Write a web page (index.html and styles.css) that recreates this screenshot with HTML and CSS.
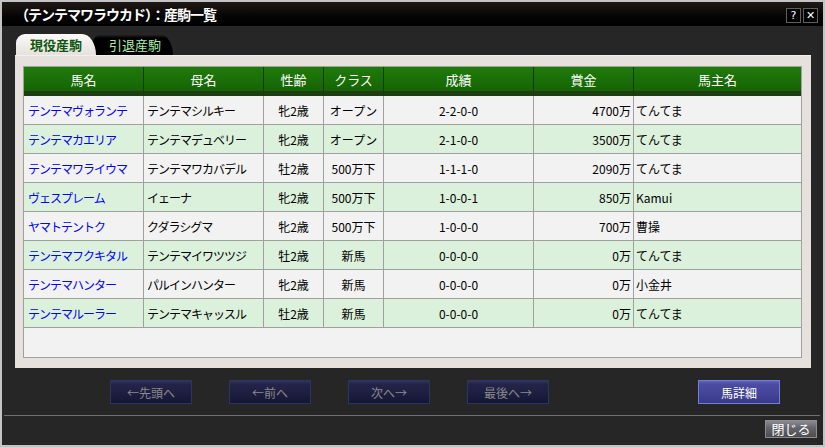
FILE: index.html
```html
<!DOCTYPE html>
<html lang="ja">
<head>
    <meta charset="UTF-8">
    <meta name="viewport" content="width=device-width,initial-scale=1.0">
    <title>産駒一覧</title>
    <link rel="stylesheet" href="styles.css">
</head>
<body>
    <div class="window">
        <div class="titlebar">
            <div class="title">（テンテマワラウカド）：産駒一覧</div>
            <div class="title-btns">
                <span class="tbtn">?</span>
                <span class="tbtn">✕</span>
            </div>
        </div>
        <div class="body">
            <div class="tabs">
                <div class="tab active">現役産駒</div>
                <div class="tab">引退産駒</div>
            </div>
            <div class="panel">
                <div class="grid-box">
                    <table class="grid">
                        <thead>
                            <tr>
                                <th class="c-name">馬名</th>
                                <th class="c-dam">母名</th>
                                <th class="c-age">性齢</th>
                                <th class="c-class">クラス</th>
                                <th class="c-rec">成績</th>
                                <th class="c-prize">賞金</th>
                                <th class="c-owner">馬主名</th>
                            </tr>
                        </thead>
                        <tbody>
                            <tr>
                                <td class="name">テンテマヴォランテ</td><td class="dam">テンテマシルキー</td><td class="mid">牝2歳</td><td class="mid">オープン</td><td class="mid">2-2-0-0</td><td class="num">4700万</td><td class="owner">てんてま</td>
                            </tr>
                            <tr>
                                <td class="name">テンテマカエリア</td><td class="dam">テンテマデュベリー</td><td class="mid">牝2歳</td><td class="mid">オープン</td><td class="mid">2-1-0-0</td><td class="num">3500万</td><td class="owner">てんてま</td>
                            </tr>
                            <tr>
                                <td class="name">テンテマワライウマ</td><td class="dam">テンテマワカバデル</td><td class="mid">牡2歳</td><td class="mid">500万下</td><td class="mid">1-1-1-0</td><td class="num">2090万</td><td class="owner">てんてま</td>
                            </tr>
                            <tr>
                                <td class="name">ヴェスプレーム</td><td class="dam">イェーナ</td><td class="mid">牝2歳</td><td class="mid">500万下</td><td class="mid">1-0-0-1</td><td class="num">850万</td><td class="owner">Kamui</td>
                            </tr>
                            <tr>
                                <td class="name">ヤマトテントク</td><td class="dam">クダラシグマ</td><td class="mid">牝2歳</td><td class="mid">500万下</td><td class="mid">1-0-0-0</td><td class="num">700万</td><td class="owner">曹操</td>
                            </tr>
                            <tr>
                                <td class="name">テンテマフクキタル</td><td class="dam">テンテマイワツツジ</td><td class="mid">牡2歳</td><td class="mid">新馬</td><td class="mid">0-0-0-0</td><td class="num">0万</td><td class="owner">てんてま</td>
                            </tr>
                            <tr>
                                <td class="name">テンテマハンター</td><td class="dam">パルインハンター</td><td class="mid">牝2歳</td><td class="mid">新馬</td><td class="mid">0-0-0-0</td><td class="num">0万</td><td class="owner">小金井</td>
                            </tr>
                            <tr>
                                <td class="name">テンテマルーラー</td><td class="dam">テンテマキャッスル</td><td class="mid">牡2歳</td><td class="mid">新馬</td><td class="mid">0-0-0-0</td><td class="num">0万</td><td class="owner">てんてま</td>
                            </tr>
                        </tbody>
                    </table>
                </div>
            </div>
            <div class="nav">
                <button class="nav-btn">←先頭へ</button>
                <button class="nav-btn">←前へ</button>
                <button class="nav-btn">次へ→</button>
                <button class="nav-btn">最後へ→</button>
                <button class="nav-btn detail">馬詳細</button>
            </div>
            <div class="rule"></div>
            <div class="footer">
                <button class="close-btn">閉じる</button>
            </div>
        </div>
    </div>
</body>
</html>
```

FILE: styles.css
```css
body,html{
    margin:0;
    padding:0;
    background-color:#262626;
    font-family:"Noto Sans CJK JP","DejaVu Sans",sans-serif;
}
.window{
    width:825px;
    height:447px;
    box-sizing:border-box;
    border:2px solid #c4c4c4;
    background-color:#262626;
    display:flex;
    flex-direction:column;
}
.titlebar{
    height:24px;
    display:flex;
    align-items:center;
    justify-content:space-between;
    background:linear-gradient(#1f1916,#050404 60%,#000);
    padding:0 5px 0 13px;
}
.title{
    color:#fff;
    font-size:14px;
    font-weight:bold;
    letter-spacing:-1px;
    line-height:1;
}
.title-btns{
    display:flex;
    gap:2px;
    padding-top:2px;
}
.tbtn{
    width:13px;
    height:13px;
    border:1px solid #5e5e5e;
    background-color:#000;
    color:#fff;
    font-family:"DejaVu Sans",sans-serif;
    font-size:11px;
    line-height:13px;
    text-align:center;
}
.body{
    flex:1;
    display:flex;
    flex-direction:column;
}
.tabs{
    display:flex;
    height:21px;
    margin-top:8px;
    padding-left:14px;
}
.tab{
    width:80px;
    height:21px;
    box-sizing:border-box;
    font-size:13px;
    line-height:21px;
    text-align:center;
    color:#a6f0a6;
    background:linear-gradient(#2c2c2c,#000 4px);
    border-radius:9px 14px 0 0/9px 21px 0 0;
    margin-left:-3px;
    padding-left:4px;
}
.tab.active{
    position:relative;
    z-index:1;
    margin-left:0;
    padding-left:0;
    color:#0e560e;
    font-weight:bold;
    background:linear-gradient(#fbfaf8,#e6e1dc);
}
.panel{
    margin:0 12px 0 13px;
    padding:10px 9px 10px 8px;
    background-color:#e6e1dc;
    border-top:1px solid #f2efec;
}
.grid-box{
    height:292px;
    box-sizing:border-box;
    border:1px solid #a0a0a0;
    background-color:#f2f2f2;
}
.grid{
    width:100%;
    border-collapse:separate;
    border-spacing:0;
    table-layout:fixed;
    font-size:12px;
}
.grid th{
    box-sizing:border-box;
    height:29px;
    padding:0 0 5px;
    color:#fff;
    font-size:13px;
    font-weight:normal;
    background:linear-gradient(#1f7b0a,#166404 24px,#1c3e11 24px);
    border-right:1px solid #173a0c;
}
.grid th:last-child,.grid td:last-child{
    border-right:none;
}
.c-name,.c-dam{width:120px;}
.c-age,.c-class{width:60px;}
.c-rec{width:150px;}
.c-prize{width:100px;}
.grid td{
    height:28px;
    padding:0;
    border-right:1px solid #a0a0a0;
    border-bottom:1px solid #a0a0a0;
    color:#000;
    white-space:nowrap;
    overflow:hidden;
}
.grid tbody tr:nth-child(even) td{
    background-color:#dcf1db;
}
.grid td.name{
    color:#0000ff;
    padding-left:4px;
    letter-spacing:-1px;
}
.grid td.dam{
    padding-left:3px;
    letter-spacing:-1px;
}
.grid td.mid{
    text-align:center;
}
.grid td.num{
    text-align:right;
    padding-right:2px;
}
.grid td.owner{
    padding-left:2px;
}
.nav{
    display:flex;
    margin-top:12px;
    padding:0 43px 0 108px;
    gap:37px;
}
.nav-btn{
    width:82px;
    height:24px;
    padding:0;
    font-family:inherit;
    font-size:12px;
    color:#8a8a8a;
    border:1px solid #2b3560;
    background:linear-gradient(#34345a,#24244a 3px,#1f1f42 50%,#151535);
}
.nav-btn.detail{
    margin-left:auto;
    color:#fff;
    border-color:#6e80d8;
    background:linear-gradient(#6262b4,#4c4ca2 3px,#45459a 50%,#3a3a8a);
}
.rule{
    height:1px;
    margin:11px 3px 0 2px;
    background-color:#707070;
}
.footer{
    display:flex;
    justify-content:flex-end;
    padding:4px 6px 0 0;
}
.close-btn{
    width:52px;
    height:18px;
    padding:0;
    font-family:inherit;
    font-size:13px;
    line-height:16px;
    color:#fff;
    border:1px solid #8c8c90;
    background:linear-gradient(#8a8a90,#66666c 40%,#4c4c52);
}
```
